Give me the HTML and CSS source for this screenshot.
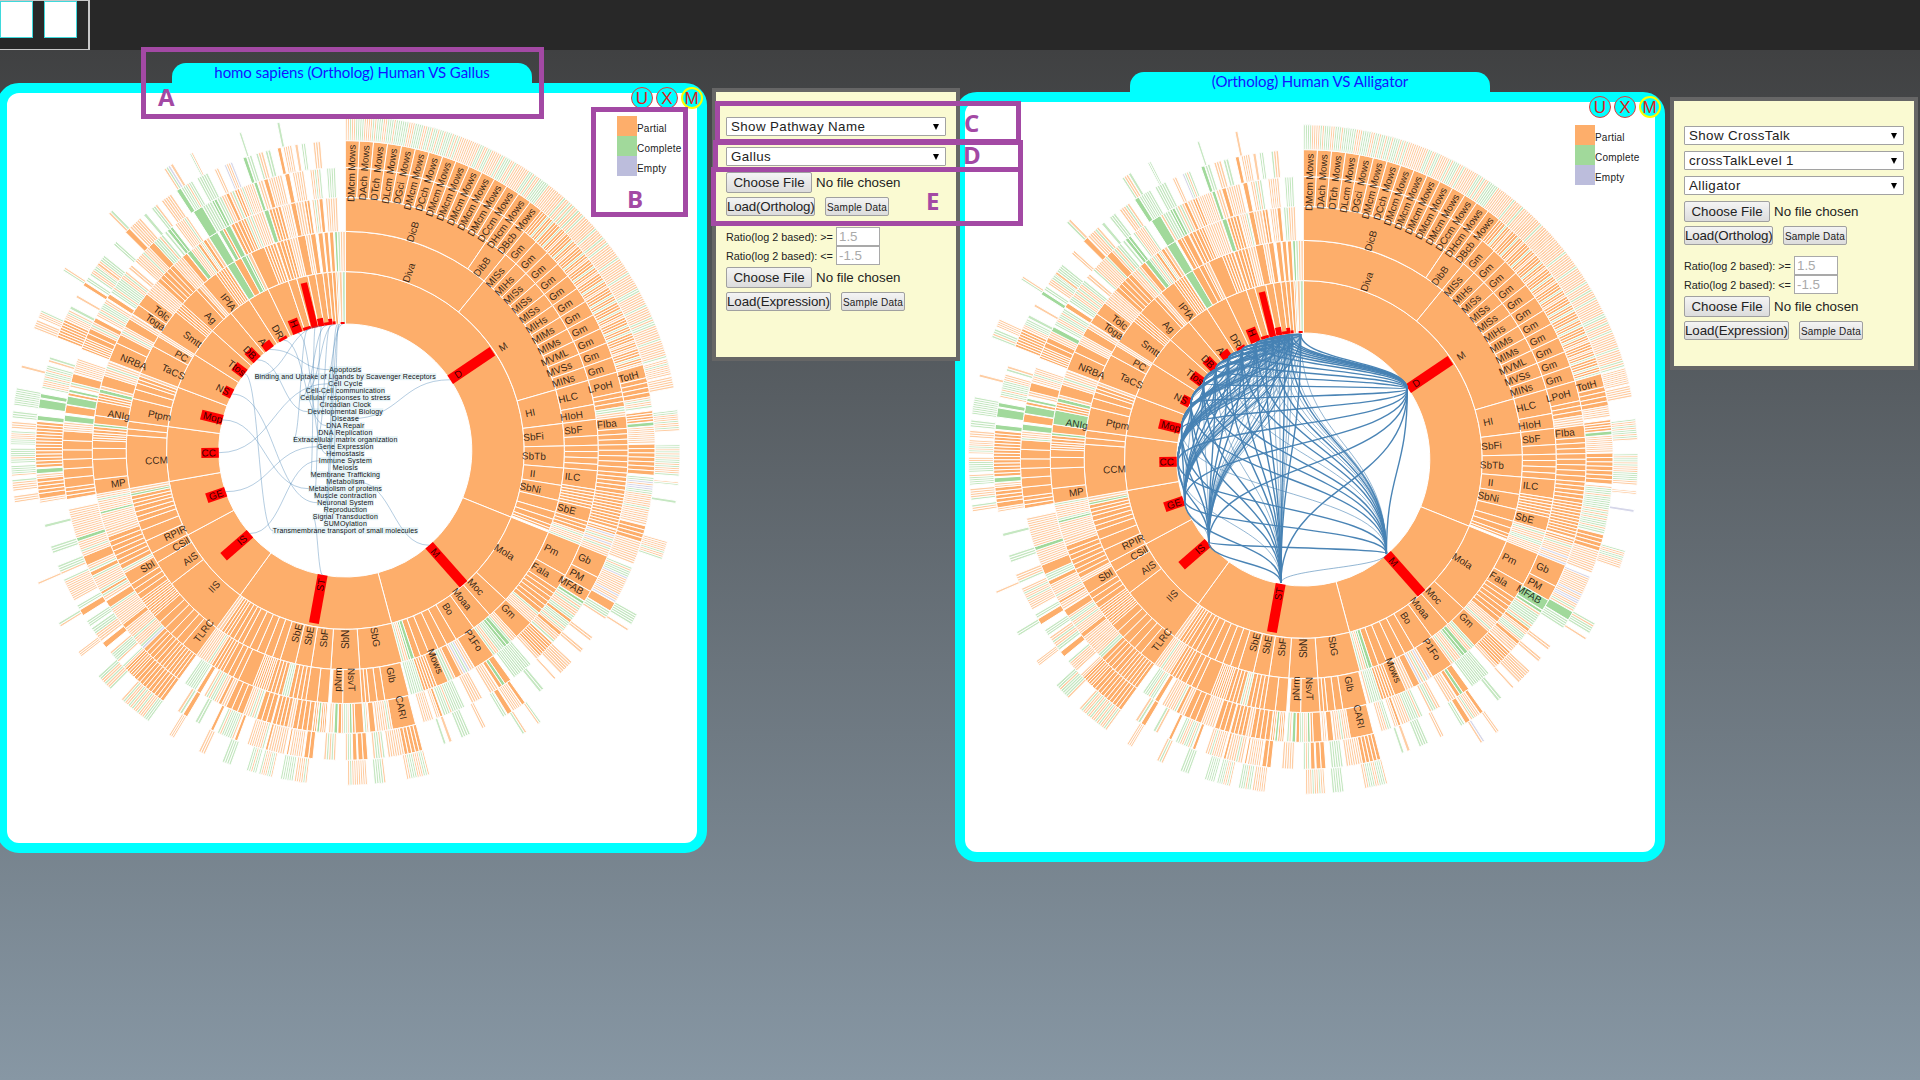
FILE: index.html
```html
<!DOCTYPE html>
<html lang="en">
<head>
<meta charset="utf-8">
<title>Pathway Ortholog Browser</title>
<link rel="stylesheet" href="styles.css">
</head>
<body>
<header class="topbar">
  <div class="thumbs"><span class="thumb"></span><span class="thumb"></span></div>
</header>
<main class="workspace">
  <section class="view">
    <h2 class="tab">homo sapiens (Ortholog) Human VS Gallus</h2>
    <div class="card">
      <svg class="chart" id="gallus" viewBox="0 0 690 750" width="690" height="750"></svg>
      <div class="actions"><span class="round">U</span><span class="round">X</span><span class="round move">M</span></div>
    </div>
  </section>
  <aside class="panel">
    <div class="select gap-lg">Show Pathway Name<i class="arrow"></i></div>
    <div class="select">Gallus<i class="arrow"></i></div>
    <div class="file"><button class="choose">Choose File</button><span>No file chosen</span></div>
    <div class="row"><button class="load ortholog">Load(Ortholog)</button><button class="sample">Sample Data</button></div>
    <div class="ratio first"><label>Ratio(log 2 based): &gt;=</label><span class="field">1.5</span></div>
    <div class="ratio"><label>Ratio(log 2 based): &lt;=</label><span class="field">-1.5</span></div>
    <div class="file second"><button class="choose">Choose File</button><span>No file chosen</span></div>
    <div class="row"><button class="load expression">Load(Expression)</button><button class="sample">Sample Data</button></div>
  </aside>
  <section class="view lower">
    <h2 class="tab">(Ortholog) Human VS Alligator</h2>
    <div class="card">
      <svg class="chart" id="alligator" viewBox="0 0 690 750" width="690" height="750"></svg>
      <div class="actions"><span class="round">U</span><span class="round">X</span><span class="round move">M</span></div>
    </div>
  </section>
  <aside class="panel lower">
    <div class="select gap-sm">Show CrossTalk<i class="arrow"></i></div>
    <div class="select gap-sm">crossTalkLevel 1<i class="arrow"></i></div>
    <div class="select">Alligator<i class="arrow"></i></div>
    <div class="file"><button class="choose">Choose File</button><span>No file chosen</span></div>
    <div class="row"><button class="load ortholog">Load(Ortholog)</button><button class="sample">Sample Data</button></div>
    <div class="ratio first"><label>Ratio(log 2 based): &gt;=</label><span class="field">1.5</span></div>
    <div class="ratio"><label>Ratio(log 2 based): &lt;=</label><span class="field">-1.5</span></div>
    <div class="file second"><button class="choose">Choose File</button><span>No file chosen</span></div>
    <div class="row"><button class="load expression">Load(Expression)</button><button class="sample">Sample Data</button></div>
  </aside>
</main>
<div class="note note-a"><b>A</b></div>
<div class="note note-b"><b>B</b></div>
<div class="note note-c"><b>C</b></div>
<div class="note note-d"><b>D</b></div>
<div class="note note-e"><b>E</b></div>
<script src="chart.js"></script>
</body>
</html>
```
FILE: styles.css
```css
* { box-sizing: border-box; }
body {
  margin: 0;
  width: 1920px;
  height: 1080px;
  overflow: hidden;
  position: relative;
  font-family: "Liberation Sans", Arial, sans-serif;
  background: linear-gradient(#404142 50px, #8797a4 1080px);
}
.topbar { height: 50px; background: #282828; }
.thumbs {
  display: flex;
  gap: 11px;
  width: 90px;
  height: 50px;
  border: 1px solid #c8c8c8;
  border-right-width: 2px;
  border-left: 0;
}
.thumb { width: 33px; height: 37px; background: #fff; border: 1px solid #3fd9dc; }
.workspace { display: flex; align-items: flex-start; margin-left: -3px; padding-top: 13px; }
.view { width: 710px; flex: none; }
.view.lower { margin: 9px 0 0 -5px; }
.tab {
  width: 360px;
  height: 20px;
  margin: 0 0 0 175px;
  border-radius: 14px 14px 0 0;
  background: #0ff;
  color: #1414ff;
  font: 400 15px/19px Lato, "Open Sans", sans-serif;
  letter-spacing: -0.08px;
  text-align: center;
  white-space: nowrap;
}
.card {
  position: relative;
  height: 770px;
  border: 10px solid #0ff;
  border-radius: 22px;
  background: #fff;
}
.chart { display: block; }
.actions { position: absolute; top: -6px; right: -6px; display: flex; gap: 3px; }
.round {
  width: 22px;
  height: 22px;
  border: 1.5px solid #e03c3c;
  border-radius: 50%;
  background: #0ff;
  color: #d22;
  font: 17px/21px "Liberation Sans", sans-serif;
  text-align: center;
}
.move { border: 2px solid #ff0; line-height: 20px; text-indent: -1px; }
.panel {
  position: relative;
  z-index: 1;
  flex: none;
  width: 248px;
  height: 273px;
  margin: 25px 0 0 5px;
  padding: 25px 10px 0;
  border: 4px solid #666;
  background: #fafad2;
  color: #222;
  font-size: 13.33px;
}
.panel.lower { margin-top: 34px; padding-top: 25px; }
.select {
  display: flex;
  justify-content: space-between;
  align-items: center;
  width: 220px;
  height: 19px;
  padding: 0 6px 0 4px;
  border: 1px solid #a2a2a2;
  border-radius: 1px;
  background: #fff;
  letter-spacing: 0.4px;
}
.gap-lg { margin-bottom: 11px; }
.gap-sm { margin-bottom: 6px; }
.arrow { border: 3px solid transparent; border-top: 6px solid #000; border-bottom: 0; }
.file { display: flex; align-items: center; gap: 4px; height: 21px; margin-top: 6px; }
.file.second { margin-top: 2px; }
button {
  padding: 0;
  border: 1px solid #a0a0a0;
  border-radius: 2px;
  background: linear-gradient(#f4f4f4, #dcdcdc);
  color: #222;
  font: 13.33px "Liberation Sans", sans-serif;
  white-space: nowrap;
}
.choose { width: 86px; height: 21px; }
.row { display: flex; gap: 10px; margin-top: 4px; height: 19px; }
.ortholog { width: 89px; letter-spacing: -0.15px; }
.expression { width: 105px; letter-spacing: -0.1px; }
.sample { width: 64px; font-size: 10px; letter-spacing: 0.2px; padding-top: 1px; }
.ratio { display: flex; align-items: center; justify-content: space-between; width: 154px; height: 19px; font-size: 10.8px; white-space: nowrap; }
.ratio.first { margin-top: 11px; }
.field { width: 44px; height: 19px; padding-left: 2px; border: 1px solid #a9a9a9; background: #fff; color: #aaa; font-size: 13.33px; line-height: 17px; }

.note { position: absolute; z-index: 2; border: 5px solid #a349a4; }
.note b { position: absolute; color: #a349a4; font: 700 24px/24px "Open Sans", sans-serif; }
.note-a { left: 141px; top: 47px; width: 403px; height: 72px; }
.note-a b { left: 12px; top: 33px; }
.note-b { left: 591px; top: 107px; width: 97px; height: 110px; }
.note-b b { left: 31px; top: 75px; }
.note-c { left: 715px; top: 101px; width: 306px; height: 43px; }
.note-c b { left: 244px; top: 5px; }
.note-d { left: 713px; top: 140px; width: 310px; height: 32px; }
.note-d b { left: 245px; top: -2px; }
.note-e { left: 711px; top: 167px; width: 312px; height: 59px; }
.note-e b { left: 210px; top: 17px; }

.seg { stroke: #fff; stroke-width: 1; }
.leaf { fill-opacity: 0.62; }
.bar { fill: #f00; }
.lab { font: 10px "Liberation Sans", sans-serif; text-anchor: middle; fill: #000; fill-opacity: 0.8; }
.key { font: 10px "Liberation Sans", sans-serif; fill: #222; letter-spacing: 0.2px; }
.name { font: 7px "Liberation Sans", sans-serif; text-anchor: middle; fill: #111; }
.namebg { fill: #add8e6; fill-opacity: 0.3; }
.tie { fill: none; stroke: steelblue; stroke-opacity: 0.4; stroke-width: 1; }
.talk { fill: none; stroke: steelblue; }
```
FILE: chart.js
```js
const NS = 'http://www.w3.org/2000/svg';
const R0 = 126.5, CX = 338.3, CY = 357.5;
const ORANGE = '#fdae6b', GREEN = '#a1d99b', LILAC = '#bcbddc';
const ringR = k => R0 * Math.sqrt(k);
const rad = d => d * Math.PI / 180;
const pt = (r, a) => [CX + r * Math.sin(rad(a)), CY - r * Math.cos(rad(a))];

// Each ring: "from to kind parts". o/g/e are solid cells; h/m/c/l are leaf fans
// (orange, mixed, green, lilac-tinted) split at the leaf pitch.
const RINGS = [
`0 111.9 o;111.9 165 o;165 216 o;216 241.8 o;241.8 260 o;260 277.7 o;277.7 290.7 o;290.7 302.5 o;302.5 312 o;312 320.2 o;320.2 327.4 o;327.4 334.4 o;334.4 341.4 o;341.4 344.2 o;344.2 347.9 o;347.9 350.4 o;350.4 352.8 o;352.8 354.4 o;354.4 355.8 o;355.8 357 o;357 357.6 o;357.6 358 g;358 360 h`,
`0 39.3 o;39.3 73.9 o;73.9 82.9 o;82.9 88.8 o;88.8 94.6 o;94.6 99.2 o;99.2 103.2 o;103.2 106.4 o;106.4 108.3 o;108.3 109.9 o;109.9 110.8 o;110.8 111.4 o;111.9 132.9 o;132.9 138.7 o;138.7 144.1 o;144.1 149.6 o;149.6 152.4 o;152.4 154.9 o;154.9 157.6 o;157.6 159.9 o;159.9 161.6 o;161.6 162.6 g;162.6 163.2 g;163.2 165 m;165 176.2 o;176.2 183.8 o;183.8 189 o;189 193.2 o;193.2 197.3 o;197.3 208 o 5;208 212 o 3;212 214.5 o 3;214.5 216 h;216 232.5 o;232.5 239.2 o;239.2 242 o;242 245.6 o;245.6 248.6 o;248.6 251 o;251 255 o 3;255 258 o 3;258 259 g;258.6 260 h;260 274 o;274 275.7 o;275.7 277.7 o;277.7 283.8 o;283.8 286.3 o;286.3 288 o;288 289.9 o 2;289.9 290.7 h;290.7 298.5 o;298.5 301.4 o;301.4 302.5 h;302.5 309.3 o;309.3 312 o 4;312 317.2 o;317.2 318.2 o;318.2 319.5 h;319.5 323.8 o;323.8 327.2 o 5;327.4 329.6 g;329.6 331.6 o;331.6 332.9 g;332.9 333.5 g;333.5 334.4 m;334.4 338.3 o;338.3 341.4 o 4;341.6 343.6 o 2;343.6 345.3 o 2;345.3 347.3 h;347.3 349.5 o;349.5 350.8 h;350.8 352.2 o;352.8 354.1 o;354.4 355.5 o;355.8 356.9 o;357.2 357.9 g;358 360 h`,
`0 34 o;34 39.3 o;39.3 73.9 o 11;73.9 79.5 o;79.5 82.9 o;82.9 86.6 o;86.6 88.8 o;88.8 94.6 o 4;94.6 98.9 o;98.9 103.3 o 6;103.3 106.4 o;106.4 109 o 3;109 111.9 h;111.9 119.6 o;119.6 123.3 o;123.3 130 o 6;130 132.9 h;132.9 137.4 o;137.4 139.4 m;139.4 140.3 g;140.3 141 g;141 144.1 m;144.1 149.2 o;149.3 152.6 l;152.6 154.2 o;154.2 156 m;156 158.8 o;158.8 162 o 5;162 165 c;165.4 171 o;171 174.5 o 2;174.5 176.2 o 2;176.2 180.6 o;180.6 183.2 o;183.8 189 o 2;189 193 o 4;193 194.5 c;194.5 198 o 4;198 201.5 o 7;201.5 205 o;205 209 o 3;209 212 o 4;212 216 h;216 220 o;220 229 o 5;229 234 o 9;234 238 o 3;238 241 o;241 242 h;242 250 o 7;250 251.8 h;251.8 255.4 h;255.4 256 g;256 260 h;260 263.4 o;263.4 268 o;268 270.5 o;270.5 272.3 o;272.3 274 o 3;274 275.5 o 2;275.5 276.1 g;276.1 278 o;278 281.3 o;281.3 283.2 o 3;283.2 284.1 g;284.1 284.8 h;284.8 287.3 o;287.3 290.6 h;290.8 295.2 o;295.2 297.3 o;297.3 299.3 h;299.3 301.4 o;301.4 302.5 h;302.7 305.2 o;305.2 308.3 o;308.3 312 h;312 317.2 o 5;317.2 319.9 h;319.9 321.2 o;321.3 322.4 g;322.4 324.3 h;324.3 325 o;325 325.8 h;325.8 326.6 o;326.6 327.3 h;327.4 329.6 g;330 331 g;331 331.6 o;331.6 332.9 g;333.1 335.6 o 3;335.6 336.8 o 2;336.8 341 h;341.2 342.3 g;342.4 345.2 o 4;345.4 347.3 h;347.5 348.7 o;348.7 350.5 h;350.6 351.9 o 2;352.4 353.9 h;354 354.9 o;355.5 358.2 h`,
`0 39.3 o 15;39.3 73.9 o 11;73.9 78 o;78 81 o 3;81 83 h;83 85.5 o;85.5 88.8 o 3;88.8 94.6 o 5;94.6 99 o 5;99 106.2 o 11;106.4 107.4 o 2;107.4 112 l;112 116.7 o;116.7 119.9 o;119.9 122.2 o;122.3 122.9 g;123 126.8 m;126.8 127.5 o;127.5 130 m;130 130.8 o;130.8 132.7 h;132.9 136.6 o 7;136.6 137.5 h;139 143.4 c;144.2 145.6 o;145.6 146.3 g;146.3 147.1 o;147.3 149.2 h;151 153.4 h;155 159.6 m;159.8 160.4 o;160.4 161.2 h;161.8 164 m;165.6 170.4 o;170.4 173.6 h;173.8 175 o;175.2 176 h;176.2 178 o;178 178.5 o;178.6 179.1 g;179.2 180.8 m;180.8 181.5 o;181.6 182.3 g;182.5 183.4 m;184 185.2 o 3;185.3 185.8 g;185.9 186.7 o 2;186.8 190.8 o 4;190.8 191.8 h;191.8 195 o 4;195.2 198.3 o 3;198.5 201.2 h;201.2 205 o 3;205 206 h;206 206.7 o;206.8 210 m;210.8 211.7 o;212 214.6 c;216 221 o 7;221 225.5 o 5;225.5 226.5 l;226.5 231 h;231 232 o;232 236.3 h;236.3 237.8 o;238 239.4 h;239.4 240 o;240 243.6 h;243.6 244.5 o;244.6 246 m;246 248 o;248 251.2 h;251.2 252 g;252 258 h;260 262.4 o 3;262.4 274 o 6;274 275.8 h;275.9 277.2 g;277.6 279.3 o;279.4 281.1 g;281.2 281.8 o;281.9 282.5 g;283 284 h;284 285.8 o;286 289 h;291 293.4 o 5;293.4 295.6 o 2;295.6 297 h;297 298 o;298.4 302.3 m;302.6 303.6 o;304 309.3 m;310 311 h;312 316 h;316 317.4 o;317.4 319.8 m;320.3 320.8 c;321 321.7 g;321.7 322.3 g;323 326 h;327.5 329.6 g;329.7 331.7 c;331.8 332.3 g;332.3 332.9 g;333 335 h;335 335.7 o;335.8 336.8 h;336.9 337.9 o 2;338 341 h;341.1 341.8 g;342 343 h;343.2 344.1 o;344.2 347 h;347.6 348.6 o;349.2 351.5 h;352.8 355 h;356.2 358 c`,
`0 39.3 o 15;M5;73.9 76.4 o;76.4 80 o 4;80 82 h;82.6 84.6 o 4;84.7 85.4 g;85.5 88.6 h;88.8 94.6 o 7;95 99 l;99 103.9 h;104.1 107.2 o 4;107.3 111.5 h;112.2 119.4 l;119.5 121.2 o;121.3 123 c;127 127.9 h;129.8 130.7 h;133 136 h;137.2 137.6 h;140.2 141.2 c;144.5 145.2 o;145.3 147.2 m;147.4 148.4 o;148.6 149.4 c;153 153.8 h;156.2 158 c;159.8 160.4 h;161 161.5 c;165.5 169 o 5;169 172 h;172.6 174.8 m;175.8 177.6 o 2;177.8 178.6 o;178.8 180 c;181.8 184 h;186 187.7 o 2;188 190.4 h;190.6 191 o;191.4 194.4 h;194.5 195 o;195.3 198.5 h;200.4 201 o;201.2 204.4 m;205.2 205.8 o;208 209 c;210.7 211.6 o;211.8 212.8 c;216 223 o 10;223 225.3 o 5;225.3 226 l;227 229.4 m;230.5 231.6 o;232 235 m;235.4 236.6 c;237.8 239 o;239.2 240 c;241 245.4 h;246.4 248.2 m;250.6 252 c;255.6 256.2 c;260.2 261 h;261 262 o;262 264.8 o 4;264.8 265.6 h;265.7 266.6 g;266.8 270.6 o 6;270.6 275.4 o 8;275.6 276.5 g;277.9 279.6 g;279.8 280.6 g;281.6 286 m;286.6 287.6 h;291.4 295 o 7;295.1 297 m;297.2 297.8 c;299.6 300.1 h;302.2 302.9 o;303.2 304 m;304.5 309 m;306.8 307.3 h;311.6 312.4 h;314.8 315.8 o;316 318.6 h;319.4 320 c;321.3 322.6 c;323.6 325.8 h;327 327.9 g;328 330.4 c;331.4 333.6 c;335 335.8 h;337 338.6 l;340.7 341.4 g;341.5 342.4 c;343.2 344.6 h;345 346 c;347.3 348 o;348.4 350 h;350.6 351.2 h;351.8 352.6 c;354 355.4 m`,
`0 39.3 m;M6;74.1 76.9 h;77.2 79.2 h;83 86.6 m;89 94.4 m;95.4 96 h;98.6 99.1 l;105.8 109 m;119.3 121.3 c;122.2 122.6 h;144.2 144.9 h;147.2 148 l;165.4 169.4 m;173 175 c;176.2 179.6 h;186.6 188.8 h;189 191.2 c;192.6 195 m;195.4 197.2 c;200 201.6 c;204.8 206 h;210.8 211.8 h;216 222 m;224.5 227.6 m;232 233 h;238.2 239 c;246.4 246.8 h;261 262.2 h;263 265 h;265.6 267.4 c;267.8 270.4 m;271 273.4 m;273.8 275 h;275.6 276.8 c;277.8 280.8 c;284.3 284.8 h;291.4 293 m;293.4 294.8 h;302.5 303.2 h;315 315.9 m;327.2 328.4 l;328.5 329 c;332.3 332.9 c;341.5 341.9 c;348.2 348.7 c`
];

// Cells whose match status differs for the alligator genome.
const SWAPS = [[2, 277.9, 278.1, 'g'], [3, 118, 121, 'g'], [4, 119.4, 119.6, 'g'], [2, 331.5, 331.7, 'o'],
  [1, 331.5, 331.7, 'o'], [1, 332.8, 333, 'o'], [2, 329.9, 330.1, 'o'], [4, 302.1, 302.3, 'g'],
  [3, 297, 297.1, 'g'], [2, 106.3, 106.5, 'l'], [4, 95, 104, 'm']];

const LABELS = [
[1,'D',56],[1,'M',138.5],[1,'ST',190.3],[1,'IS',229],[1,'GE',251],[1,'CC',269],[1,'Mop',284],[1,'NS',296.5],[1,'Ttos',307.3],[1,'DB',315.8],[1,'A',322.8],[1,'DR',330.5],[1,'H',338],
[2,'Diva',19.7],[2,'M',56.7],[2,'HI',78.5],[2,'SbFi',85.8],[2,'SbTb',91.7],[2,'II',97],[2,'SbNi',101.4],[2,'Mola',122.5],[2,'Moc',136.2],[2,'Moaa',141.8],[2,'Bo',147],[2,'SbG',170.8],[2,'SbN',180],[2,'SbF',186.4],[2,'SbE',191],[2,'SbE',194.8],[2,'IIS',223.9],[2,'AIS',235],[2,'CSil',240.3],[2,'RPIR',244.1],[2,'CCM',267],[2,'Ptpm',280.7],[2,'TaCS',294.6],[2,'PC',300],[2,'Smtt',306.1],[2,'Ag',314.6],[2,'IPfA',321.8],
[3,'DicB',17.2],[3,'DibB',36.7],[3,'HLC',76.7],[3,'HIoH',81.3],[3,'SbF',84.9],[3,'ILC',96.6],[3,'SbE',104.8],[3,'Pm',115.7],[3,'Fala',121.4],[3,'Gm',134.5],[3,'P1Fo',145.9],[3,'Mows',156.8],[3,'Glb',168.4],[3,'NsvT',178.4],[3,'pNrm',181.8],[3,'TLRC',218.1],[3,'SbI',239.6],[3,'MP',261.8],[3,'ANIg',278.9],[3,'NRBA',292.7],[3,'Toga',304.1],[3,'Tolc',306.8],
[4,'LPoH',76],[4,'FIba',84.2],[4,'Gb',114.3],[4,'PM',118.2],[4,'MFAB',120.8],[4,'CARI',167.7],[5,'TotH',75.4]];
'DMcm DAch DTch DLcm DGci DMcm DCch DMcm DMcm DMcm DMcm DMcm DCcm DHcm DBcb'.split(' ').forEach((t, i) => {
  LABELS.push([4, t, 1.3 + 2.62 * i], [5, 'Mows', 1.3 + 2.62 * i]);
});
'MISs MIHs MISs MISs MISs MIHs MIMs MIMs MVML MVSs MINs'.split(' ').forEach((t, i) => {
  LABELS.push([3, t, 40.9 + 3.145 * i], [4, 'Gm', 40.9 + 3.145 * i]);
});

// Over-representation bars: angle, length, width.
const BARS = [[56, 51, 10], [138.5, 52, 10], [190.3, 49, 10], [228.9, 35, 10], [251, 20, 10], [269, 17.5, 10], [284, 22, 10], [296.5, 9, 10], [307.3, 13, 10], [315.8, 13, 10], [323.4, 8, 10], [330.8, 3, 9], [338, 15, 10], [342.6, 3, 8], [346.1, 46, 6.5], [349.1, 8, 6], [351.6, 3, 5], [353.4, 6, 4], [355, 3, 3], [358.8, 2, 4]];

const NAMES = ['Apoptosis', 'Binding and Uptake of Ligands by Scavenger Receptors', 'Cell Cycle', 'Cell-Cell communication', 'Cellular responses to stress', 'Circadian Clock', 'Developmental Biology', 'Disease', 'DNA Repair', 'DNA Replication', 'Extracellular matrix organization', 'Gene Expression', 'Hemostasis', 'Immune System', 'Meiosis', 'Membrane Trafficking', 'Metabolism', 'Metabolism of proteins', 'Muscle contraction', 'Neuronal System', 'Reproduction', 'Signal Transduction', 'SUMOylation', 'Transmembrane transport of small molecules'];
const NAME_W = [32, 181, 34, 79, 90, 51, 75, 27, 38, 54, 104, 56, 38, 53, 25, 69, 38, 73, 62, 56, 43, 65, 43, 145];
const NAME_ANGLE = [323, 349, 269, 355, 351.6, 358.9, 315.8, 56, 330.8, 353.4, 342.8, 251, 338, 229, 357, 346.2, 138.5, 284, 349.2, 296.5, 356.5, 190.3, 357.6, 307.3];

function make(parent, tag, attrs, text) {
  const el = document.createElementNS(NS, tag);
  for (const k in attrs) el.setAttribute(k, attrs[k]);
  if (text) el.textContent = text;
  parent.appendChild(el);
  return el;
}

let seed = 7;
const rand = () => (seed = (seed * 16807) % 2147483647) / 2147483647;
function leafColor(kind) {
  const v = rand();
  if (kind === 'h') return v < 0.9 ? ORANGE : GREEN;
  if (kind === 'c') return v < 0.85 ? GREEN : ORANGE;
  if (kind === 'l') return v < 0.35 ? LILAC : v < 0.8 ? ORANGE : GREEN;
  return v < 0.55 ? ORANGE : GREEN;
}

function cell(svg, k, a, b, fill, cls) {
  const r1 = ringR(k), r2 = ringR(k + 1), big = b - a > 180 ? 1 : 0;
  const f = p => p.map(n => n.toFixed(2)).join(' ');
  make(svg, 'path', { class: cls, fill, d: `M${f(pt(r1, a))}A${r1} ${r1} 0 ${big} 1 ${f(pt(r1, b))}L${f(pt(r2, b))}A${r2} ${r2} 0 ${big} 0 ${f(pt(r2, a))}Z` });
}

function expand(spec) {
  const out = [];
  spec.split(';').forEach(s => {
    if (s === 'M5' || s === 'M6') {
      for (let i = 0; i < 11; i++) {
        const a = 39.3 + 3.145 * i;
        if (s === 'M5') out.push([a, a + 1.5, 'o', 3], [a + 1.5, a + 1.85, 'c'], [a + 1.85, a + 2.75, 'o', 2], [a + 2.75, a + 3.1, 'm']);
        else out.push([a, a + 2.75, 'h'], [a + 2.75, a + 3.1, 'c']);
      }
      return;
    }
    const p = s.split(' ');
    out.push([+p[0], +p[1], p[2], +p[3] || 1]);
  });
  return out;
}

function sunburst(svg, swaps) {
  seed = 7;
  RINGS.forEach((spec, i) => {
    expand(spec).forEach(([a, b, kind, n]) => {
      swaps.forEach(s => { if (s[0] === i && a >= s[1] && a <= s[2]) kind = s[3]; });
      const solid = { o: ORANGE, g: GREEN, e: LILAC }[kind];
      if (!solid) n = Math.max(1, Math.round((b - a) / (0.34 * Math.sqrt(7 / (i + 1)))));
      const w = (b - a) / n;
      for (let j = 0; j < n; j++) cell(svg, i + 1, a + j * w, a + (j + 1) * w, solid || leafColor(kind), solid ? 'seg' : 'seg leaf');
    });
  });
  BARS.forEach(([a, len, w]) => make(svg, 'rect', { class: 'bar', x: -w / 2, y: -R0 - len, width: w, height: len, transform: `translate(${CX} ${CY}) rotate(${a})` }));
  LABELS.forEach(([k, t, a]) => {
    const [x, y] = pt(ringR(k) + 10, a);
    make(svg, 'text', { class: 'lab', dy: '.35em', transform: `translate(${(x - 0.2).toFixed(1)} ${y.toFixed(1)}) rotate(${a < 180 ? a - 90 : a + 90})` }, t);
  });
  [['Partial', ORANGE], ['Complete', GREEN], ['Empty', LILAC]].forEach(([t, fill], i) => {
    make(svg, 'rect', { x: 610, y: 23 + 20 * i, width: 20, height: 20, fill });
    make(svg, 'text', { class: 'key', x: 630, y: 39 + 20 * i }, t);
  });
}

function pathwayNames(svg) {
  NAMES.forEach((t, i) => {
    const y = 276.7 + 7 * i, w = NAME_W[i], a = NAME_ANGLE[i];
    const [sx, sy] = pt(R0, a), ex = a < 180 ? CX + w / 2 - 8 : CX - w / 2, mx = (sx + ex) / 2;
    make(svg, 'rect', { class: 'namebg', x: CX - w / 2 - 0.5, y: y - 3.5, width: w + 1, height: 7 });
    make(svg, 'path', { class: 'tie', d: `M${sx} ${sy}C${mx} ${sy} ${mx} ${y} ${ex} ${y}` });
    make(svg, 'text', { class: 'name', x: CX, y: y + 2.3, textLength: w }, t);
  });
}

function crossTalk(svg) {
  const main = 13;
  BARS.forEach(([a], i) => {
    for (let j = i + 1; j < BARS.length; j++) {
      const [x1, y1] = pt(R0 - 1, a), [x2, y2] = pt(R0 - 1, BARS[j][0]), my = (y1 + y2) / 2;
      const strong = i === 0 || (j < main ? (i + j) % 4 !== 3 : (i + j) % 3 === 0);
      make(svg, 'path', { class: 'talk', 'stroke-width': strong ? 1.4 : 0.9, 'stroke-opacity': strong ? 0.98 : 0.65, d: `M${x1} ${y1}C${x1} ${my} ${x2} ${my} ${x2} ${y2}` });
    }
  });
}

const gallus = document.getElementById('gallus');
const alligator = document.getElementById('alligator');
sunburst(gallus, []);
pathwayNames(gallus);
sunburst(alligator, SWAPS);
crossTalk(alligator);
```
